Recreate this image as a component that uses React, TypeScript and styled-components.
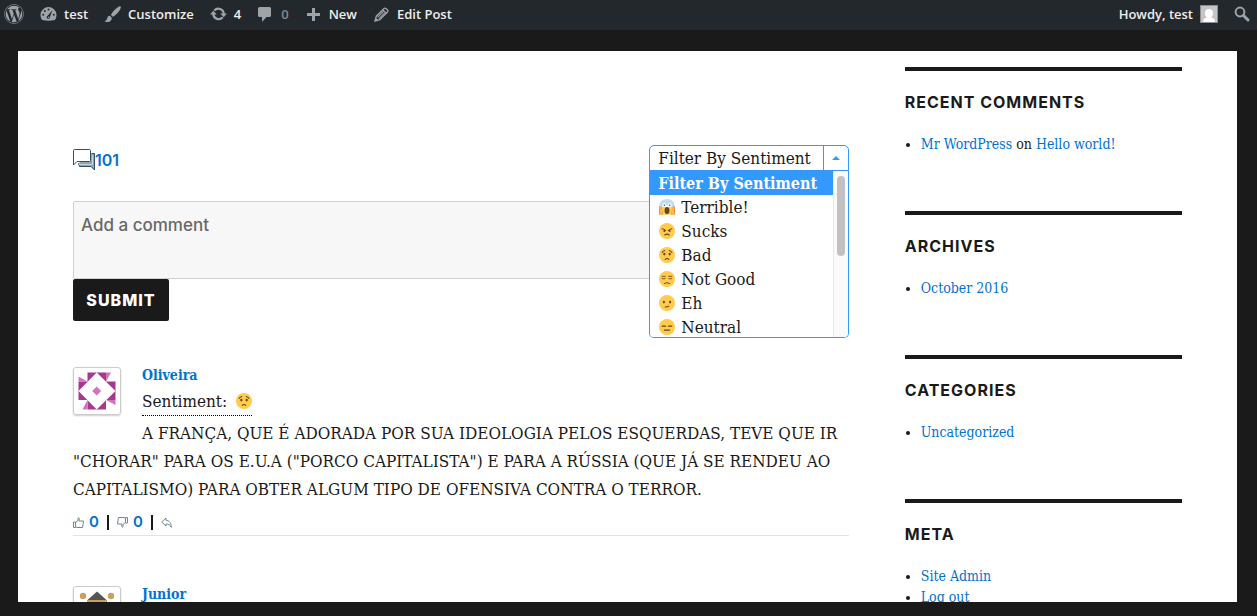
import React, { useState } from "react";
import styled, { createGlobalStyle } from "styled-components";
import { FaWordpress } from "react-icons/fa6";

const serif = `"DejaVu Serif Condensed", "DejaVu Serif", serif`;
const display = `Inter, "Liberation Sans", sans-serif`;
const link = "#0073cf";
const ink = "#1a1a1a";
const accent = "#3399ff";

const GlobalStyle = createGlobalStyle`
  *, *::before, *::after { box-sizing: border-box; }
  body { margin: 0; background: ${ink}; color: ${ink}; font-family: ${serif}; font-size: 17px; }
  a { color: ${link}; text-decoration: none; }
  a:hover { text-decoration: underline; }
  svg { display: block; flex: none; }
`;

const Shell = styled.div`
  height: 100vh;
  display: flex;
  flex-direction: column;
  padding-bottom: 14px;
`;

const AdminBar = styled.nav`
  height: 30px;
  flex: none;
  display: flex;
  justify-content: space-between;
  align-items: center;
  padding: 0 6px 2px 4px;
  background: #23282d;
  font-family: "Open Sans", sans-serif;
  font-size: 13px;
  font-weight: 600;
`;

const BarGroup = styled.div`
  display: flex;
  align-items: center;
  gap: 16px;
`;

const BarLink = styled.a<{ $dim?: boolean }>`
  display: flex;
  align-items: center;
  gap: 7px;
  color: ${(p) => (p.$dim ? "#85898d" : "#eeeeee")};
  svg { color: #9ea3a8; }
`;

const SearchButton = styled.button`
  border: 0;
  padding: 0;
  background: none;
  color: #9ea3a8;
`;

const Page = styled.div`
  flex: 1;
  min-height: 0;
  margin: 21px 20px 0 18px;
  padding: 0 55px;
  background: #fff;
  overflow: hidden;
  display: flex;
  justify-content: space-between;
  align-items: flex-start;
`;

const Main = styled.main`
  width: 70%;
  padding-top: 94px;
`;

const Sidebar = styled.aside`
  width: 25%;
  padding-top: 16px;
`;

const Widget = styled.section`
  border-top: 4px solid ${ink};
  padding: 21px 0 56px;
`;

const WidgetTitle = styled.h2`
  margin: 0 0 21px;
  font: 700 16px/21px ${display};
  letter-spacing: 1px;
  text-transform: uppercase;
`;

const WidgetList = styled.ul`
  margin: 0;
  padding-left: 16px;
  list-style: none;
  font-size: 14px;
  line-height: 21px;
  li { position: relative; }
  li::before {
    content: "";
    position: absolute;
    left: -15px;
    top: 9px;
    width: 4px;
    height: 4px;
    border-radius: 50%;
    background: ${ink};
  }
`;

const TopRow = styled.div`
  display: flex;
  justify-content: space-between;
  height: 26px;
  margin-bottom: 30px;
`;

const Count = styled.a`
  display: flex;
  align-items: center;
  height: 30px;
  font: 600 16px/30px ${display};
`;

const Filter = styled.div`
  position: relative;
  width: 200px;
`;

const FilterSelect = styled.select`
  appearance: none;
  width: 100%;
  height: 26px;
  padding: 1px 0 0 8px;
  border: 1px solid ${accent};
  border-radius: 5px 5px 0 0;
  background: #fff;
  color: ${ink};
  font: 17px/23px ${serif};
`;

const FilterArrow = styled.span`
  position: absolute;
  top: 1px;
  right: 1px;
  width: 25px;
  height: 24px;
  border-left: 1px solid ${accent};
  display: grid;
  place-items: center;
  color: ${accent};
  pointer-events: none;
`;

const Menu = styled.div`
  position: absolute;
  z-index: 2;
  top: 26px;
  left: 0;
  right: 0;
  height: 167px;
  border: 1px solid ${accent};
  border-top: 0;
  border-radius: 0 0 5px 5px;
  background: #fff;
  overflow: hidden;
  display: flex;
`;

const Options = styled.ul`
  flex: 1;
  margin: 0;
  padding: 0;
  list-style: none;
`;

const Option = styled.li<{ $active?: boolean }>`
  display: flex;
  align-items: center;
  gap: 6px;
  height: 24px;
  padding-left: ${(p) => (p.$active ? 8 : 9)}px;
  white-space: nowrap;
  background: ${(p) => (p.$active ? accent : "#fff")};
  color: ${(p) => (p.$active ? "#fff" : ink)};
  font-size: ${(p) => (p.$active ? 16 : 17)}px;
  font-weight: ${(p) => (p.$active ? 700 : 400)};
`;

const Track = styled.div`
  width: 15px;
  padding: 5px 3px 0 3px;
  background: #fafafa;
  border-left: 1px solid #e8e8e8;
`;

const Thumb = styled.div`
  height: 80px;
  border-radius: 4px;
  background: #c1c1c1;
`;

const CommentBox = styled.textarea`
  display: block;
  width: 100%;
  height: 78px;
  padding: 12px 7px;
  border: 1px solid #d1d1d1;
  border-radius: 2px;
  background: #f7f7f7;
  resize: none;
  font: 500 17px/22px ${display};
  &::placeholder { color: #686868; opacity: 1; }
`;

const Submit = styled.button`
  height: 42px;
  width: 96px;
  margin-bottom: 46px;
  padding: 0;
  display: block;
  border: 0;
  border-radius: 2px;
  background: ${ink};
  color: #fff;
  font: 800 16px/42px ${display};
  letter-spacing: 1px;
`;

const Comment = styled.article`
  border-bottom: 1px solid #e3e3e3;
  margin-bottom: 50px;
`;

const Avatar = styled.div`
  float: left;
  width: 48px;
  height: 48px;
  margin: 0 21px 8px 0;
  padding: 3px;
  border: 1px solid #ccc;
  border-radius: 3px;
  box-shadow: 0 1px 2px rgba(0, 0, 0, 0.2);
`;

const Author = styled.a`
  display: block;
  font-size: 14px;
  line-height: 16px;
  font-weight: 700;
`;

const Sentiment = styled.div`
  display: flex;
  align-items: center;
  gap: 9px;
  width: fit-content;
  height: 33px;
  padding-top: 4px;
  border-bottom: 1px dotted #000;
`;

const Body = styled.p`
  margin: 3px 0 6px;
  line-height: 28px;
`;

const Actions = styled.div`
  display: flex;
  align-items: center;
  height: 26px;
  gap: 4px;
  font: 600 15px/20px ${display};
`;

const Vote = styled.button`
  display: flex;
  align-items: center;
  gap: 5px;
  padding: 0;
  border: 0;
  background: none;
  color: ${link};
  font: inherit;
`;

const Divider = styled.span`
  width: 2px;
  height: 15px;
  margin: 0 4px;
  background: ${ink};
`;

type Mood = "terrible" | "sucks" | "bad" | "notgood" | "eh" | "neutral";

function Emoji({ mood }: { mood: Mood }) {
  const line = { fill: "none", stroke: "#65471b", strokeWidth: 2.4, strokeLinecap: "round" as const };
  if (mood === "terrible") {
    return (
      <svg width="16" height="16" viewBox="0 0 36 36" aria-hidden="true">
        <path d="M36 18a18 18 0 0 1-36 0" fill="#ffcb4c" />
        <path d="M0 20C0 7 8 0 18 0s18 7 18 20c-4 3-10-6-18-6S4 23 0 20z" fill="#bdddf4" />
        <circle cx="12" cy="14" r="4.500" fill="#fff" />
        <circle cx="24" cy="14" r="4.500" fill="#fff" />
        <circle cx="12" cy="14" r="1.800" fill="#65471b" />
        <circle cx="24" cy="14" r="1.800" fill="#65471b" />
        <ellipse cx="18" cy="26" rx="5.500" ry="8" fill="#65471b" />
        <path d="M1 17c3-2 5 2 6 7l3 12H1c-2-6-2-14 0-19zM35 17c-3-2-5 2-6 7l-3 12h9c2-6 2-14 0-19z" fill="#f19020" />
        <path d="M2 18c3 0 4 4 5 9l2 9H2zM34 18c-3 0-4 4-5 9l-2 9h7z" fill="#ffb858" />
      </svg>
    );
  }
  return (
    <svg width="16" height="16" viewBox="0 0 36 36" aria-hidden="true">
      <circle cx="18" cy="18" r="18" fill="#ffcb4c" />
      {mood === "sucks" && (
        <g>
          <path d="M7 13q5 1 8 4M29 13q-5 1-8 4M13 27q5-4 10 0" {...line} />
          <circle cx="12" cy="18" r="2.2" fill="#65471b" />
          <circle cx="24" cy="18" r="2.2" fill="#65471b" />
        </g>
      )}
      {mood === "bad" && (
        <g>
          <path d="M7 12q3-3 6-4M29 12q-3-3-6-4M14 28q4-4 8 0" {...line} />
          <ellipse cx="12" cy="16" rx="2.6" ry="3.2" fill="#65471b" />
          <ellipse cx="24" cy="16" rx="2.6" ry="3.2" fill="#65471b" />
        </g>
      )}
      {mood === "notgood" && (
        <path d="M7 12h7M22 12h7M7 17q4 2 7 0M22 17q4 2 7 0M12 28q6-4 12 0" {...line} strokeWidth={2} />
      )}
      {mood === "eh" && (
        <g>
          <ellipse cx="11" cy="16" rx="2.4" ry="3.2" fill="#65471b" />
          <ellipse cx="25" cy="16" rx="2.4" ry="3.2" fill="#65471b" />
          <path d="M14 27q5 0 8-2" {...line} />
        </g>
      )}
      {mood === "neutral" && <path d="M7 16h8M21 16h8M12 25h12" {...line} />}
    </svg>
  );
}

const GaugeIcon = () => (
  <svg width="17" height="16" viewBox="0 0 17 16" aria-hidden="true">
    <path d="M2.2 14A8 8 0 1 1 14.800 14Q8.500 15.400 2.200 14z" fill="currentColor" />
    <g fill="#23282d">
      <circle cx="8.500" cy="3.500" r="1" />
      <circle cx="4.800" cy="5" r="1" />
      <circle cx="3.200" cy="8.700" r="1" />
      <circle cx="13.800" cy="8.700" r="1" />
      <path d="M12.600 4L9.800 11.200a1.600 1.600 0 1 1-2.400-1.300z" />
    </g>
    <circle cx="8.400" cy="11.200" r=".7" fill="currentColor" />
  </svg>
);

const BrushIcon = () => (
  <svg width="17" height="17" viewBox="0 0 17 17" aria-hidden="true" fill="currentColor">
    <path d="M16.600.4c-.8-.8-2.700.2-6.300 3.800C8.600 6 7.300 7.900 7 9l1.700 1.800c1.200-.4 3-1.800 4.600-3.600C16.300 4 17.400 1.300 16.600.4zM6.100 9.900c-1.400-.2-2.400.5-2.800 2-.3 1.300-1 2.600-3 3.600 2.600 1 6.500.6 7.300-2.300.2-.9.100-1.500-.2-2z" />
  </svg>
);

const UpdateIcon = () => (
  <svg width="17" height="16" viewBox="0 0 17 16" aria-hidden="true">
    <path d="M4.300 4.600A5.300 5.300 0 0 1 13.700 8M12.700 11.200A5.300 5.300 0 0 1 3.300 8" fill="none" stroke="currentColor" strokeWidth="2.200" />
    <path d="M10.200 7.400H17L13.700 11.200zM0 8.600h6.800L3.300 4.800z" fill="currentColor" />
  </svg>
);

const BubbleIcon = () => (
  <svg width="17" height="16" viewBox="0 0 17 16" aria-hidden="true">
    <path d="M2.500 1h10A1.500 1.500 0 0 1 14 2.500v7a1.500 1.500 0 0 1-1.500 1.500H9.500L5 16V11H2.500A1.500 1.500 0 0 1 1 9.500v-7A1.500 1.500 0 0 1 2.500 1z" fill="currentColor" />
  </svg>
);

const PlusIcon = () => (
  <svg width="17" height="14" viewBox="0 0 17 14" aria-hidden="true">
    <path d="M8.500 1v13M2 7.500h13" stroke="currentColor" strokeWidth="3" />
  </svg>
);

const PencilIcon = () => (
  <svg width="17" height="15" viewBox="-1 0 17 15" aria-hidden="true">
    <path d="M1 14l1.300-4.800L9.800 1.700a1.700 1.700 0 0 1 2.400 0l1.100 1.100a1.700 1.700 0 0 1 0 2.400L5.800 12.700z" fill="none" stroke="currentColor" strokeWidth="1.300" />
    <path d="M3.500 10.300l6.800-6.800M5 11.600l6.800-6.800M8.800 2.700l3.500 3.500" stroke="currentColor" strokeWidth="1.100" />
    <path d="M.8 14.200l1-3.400 2.400 2.400z" fill="currentColor" />
  </svg>
);

const SearchIcon = () => (
  <svg width="17" height="17" viewBox="0 0 17 17" aria-hidden="true">
    <circle cx="6" cy="6" r="4.400" fill="none" stroke="currentColor" strokeWidth="2" />
    <path d="M9.500 9.500l4.500 4.500" stroke="currentColor" strokeWidth="3" strokeLinecap="round" />
  </svg>
);

const ProfileIcon = () => (
  <svg width="18" height="18" viewBox="0 0 18 18" aria-hidden="true">
    <path d="M0 0h18v18H0z" fill="#8c8f94" />
    <path d="M1 1h16v16H1z" fill="#c5c5c5" />
    <path d="M3 17c0-3 2-4 4-4.500-1.500-1-2-2.500-2-4.500 0-2.500 1.500-4 4-4s4 1.500 4 4c0 2-.5 3.500-2 4.500 2 .5 4 1.500 4 4.500z" fill="#fff" />
  </svg>
);

const ThreadsIcon = () => (
  <svg width="22" height="22" viewBox="0 0 22 22" aria-hidden="true" fill="none" stroke="#2d5366">
    <path d="M18.500 4.500h3v16.500l-3.500-3.500H6.500l-1-3" fill="#8fa6b1" />
    <path d="M19.500 6.500v9M6 15.500h13.500" stroke="#c9d5da" />
    <path d="M1.500.5h15a1 1 0 0 1 1 1v10a1 1 0 0 1-1 1H4L.5 16V1.500a1 1 0 0 1 1-1z" fill="#fff" />
  </svg>
);

const ThumbIcon = ({ down }: { down?: boolean }) => (
  <svg width="11" height="11" viewBox="0 0 11 11" aria-hidden="true" fill="none" stroke="#6f8994">
    <g transform={down ? "rotate(180 5.500 5.500)" : undefined}>
      <path d="M.5 5h2v5.500h-2z" />
      <path d="M2.500 5.500L5 3.500V1.500Q5-.2 6.300 1.500L6 4h4.500L9.600 10.500H4l-1.500-.8" />
    </g>
  </svg>
);

const ReplyIcon = () => (
  <svg width="11" height="11" viewBox="0 0 11 11" aria-hidden="true" fill="none" stroke="#6f8994">
    <path d="M.7 5L5 1v2.300c3.500 0 5.200 3 5.300 7C9 7.800 7.500 7 5 7v2z" />
  </svg>
);

const QuiltAvatar = () => (
  <svg width="40" height="40" viewBox="0 0 40 40" aria-hidden="true">
    <path d="M10.500 1.500h18.500v9h9.500v18.500h-9.500v9.500H10.500v-9.500H1.500v-18.500h9z" fill="#a8388f" />
    <path d="M29 1.500h5l-5 9zM38.500 29v5l-9.500-5zM10.500 38.500h-5l5-9.500zM1.500 10.500v-5l9 5z" fill="#cf75bb" />
    <path d="M19.700 1.500L38.500 20 19.700 38.500 1.500 20z" fill="#fff" />
    <path d="M19.700 15.500l4.500 4.500-4.500 4.500-4.500-4.500z" fill="#cf75bb" />
  </svg>
);

const RoofAvatar = () => (
  <svg width="40" height="40" viewBox="0 0 40 40" aria-hidden="true">
    <circle cx="6" cy="6" r="3.200" fill="#c9a063" />
    <circle cx="34" cy="6" r="3.200" fill="#c9a063" />
    <circle cx="6" cy="34" r="3.200" fill="#c9a063" />
    <circle cx="34" cy="34" r="3.200" fill="#c9a063" />
    <path d="M10 10h20v20H10z" fill="#c9a063" />
    <path d="M20 1.500l9.500 8.500h-19zM20 38l9-8.500H11z" fill="#555" />
  </svg>
);

const moods: { label: string; mood: Mood }[] = [
  { label: "Terrible!", mood: "terrible" },
  { label: "Sucks", mood: "sucks" },
  { label: "Bad", mood: "bad" },
  { label: "Not Good", mood: "notgood" },
  { label: "Eh", mood: "eh" },
  { label: "Neutral", mood: "neutral" },
];

const widgets: { title: string; items: React.ReactNode[] }[] = [
  { title: "Recent Comments", items: [<><a href="#author">Mr WordPress</a> on <a href="#post">Hello world!</a></>] },
  { title: "Archives", items: [<a href="#archive">October 2016</a>] },
  { title: "Categories", items: [<a href="#category">Uncategorized</a>] },
  { title: "Meta", items: [<a href="#admin">Site Admin</a>, <a href="#logout">Log out</a>] },
];

export default function App() {
  const [filter, setFilter] = useState("Filter By Sentiment");
  return (
    <>
      <GlobalStyle />
      <Shell>
        <AdminBar>
          <BarGroup>
            <BarLink href="#about" aria-label="About WordPress"><FaWordpress size={20} /></BarLink>
            <BarLink href="#site"><GaugeIcon />test</BarLink>
            <BarLink href="#customize"><BrushIcon />Customize</BarLink>
            <BarLink href="#updates"><UpdateIcon />4</BarLink>
            <BarLink href="#comments" $dim><BubbleIcon />0</BarLink>
            <BarLink href="#new"><PlusIcon />New</BarLink>
            <BarLink href="#edit"><PencilIcon />Edit Post</BarLink>
          </BarGroup>
          <BarGroup>
            <BarLink href="#profile">Howdy, test<ProfileIcon /></BarLink>
            <SearchButton aria-label="Search"><SearchIcon /></SearchButton>
          </BarGroup>
        </AdminBar>
        <Page>
          <Main>
            <TopRow>
              <Count href="#comments"><ThreadsIcon />101</Count>
              <Filter>
                <FilterSelect aria-label="Filter By Sentiment" value={filter} onChange={(e) => setFilter(e.target.value)}>
                  <option>Filter By Sentiment</option>
                  {moods.map((m) => <option key={m.mood}>{m.label}</option>)}
                </FilterSelect>
                <FilterArrow>
                  <svg width="8" height="4" viewBox="0 0 8 4" aria-hidden="true"><path d="M0 4l4-4 4 4z" fill="currentColor" /></svg>
                </FilterArrow>
                <Menu>
                  <Options role="listbox" aria-label="Sentiments">
                    <Option role="option" aria-selected={filter === "Filter By Sentiment"} $active={filter === "Filter By Sentiment"} onClick={() => setFilter("Filter By Sentiment")}>
                      Filter By Sentiment
                    </Option>
                    {moods.map((m) => (
                      <Option key={m.mood} role="option" aria-selected={filter === m.label} $active={filter === m.label} onClick={() => setFilter(m.label)}>
                        <Emoji mood={m.mood} />
                        {m.label}
                      </Option>
                    ))}
                  </Options>
                  <Track><Thumb /></Track>
                </Menu>
              </Filter>
            </TopRow>
            <CommentBox aria-label="Add a comment" placeholder="Add a comment" />
            <Submit type="submit">SUBMIT</Submit>
            <Comment>
              <Avatar><QuiltAvatar /></Avatar>
              <Author href="#oliveira">Oliveira</Author>
              <Sentiment>Sentiment: <Emoji mood="bad" /></Sentiment>
              <Body>
                A FRANÇA, QUE É ADORADA POR SUA IDEOLOGIA PELOS ESQUERDAS, TEVE QUE IR "CHORAR" PARA OS E.U.A
                ("PORCO CAPITALISTA") E PARA A RÚSSIA (QUE JÁ SE RENDEU AO CAPITALISMO) PARA OBTER ALGUM TIPO
                DE OFENSIVA CONTRA O TERROR.
              </Body>
              <Actions>
                <Vote aria-label="Like"><ThumbIcon />0</Vote>
                <Divider />
                <Vote aria-label="Dislike"><ThumbIcon down />0</Vote>
                <Divider />
                <Vote aria-label="Reply"><ReplyIcon /></Vote>
              </Actions>
            </Comment>
            <Comment>
              <Avatar><RoofAvatar /></Avatar>
              <Author href="#junior">Junior</Author>
            </Comment>
          </Main>
          <Sidebar>
            {widgets.map((w) => (
              <Widget key={w.title}>
                <WidgetTitle>{w.title}</WidgetTitle>
                <WidgetList>{w.items.map((item, i) => <li key={i}>{item}</li>)}</WidgetList>
              </Widget>
            ))}
          </Sidebar>
        </Page>
      </Shell>
    </>
  );
}
